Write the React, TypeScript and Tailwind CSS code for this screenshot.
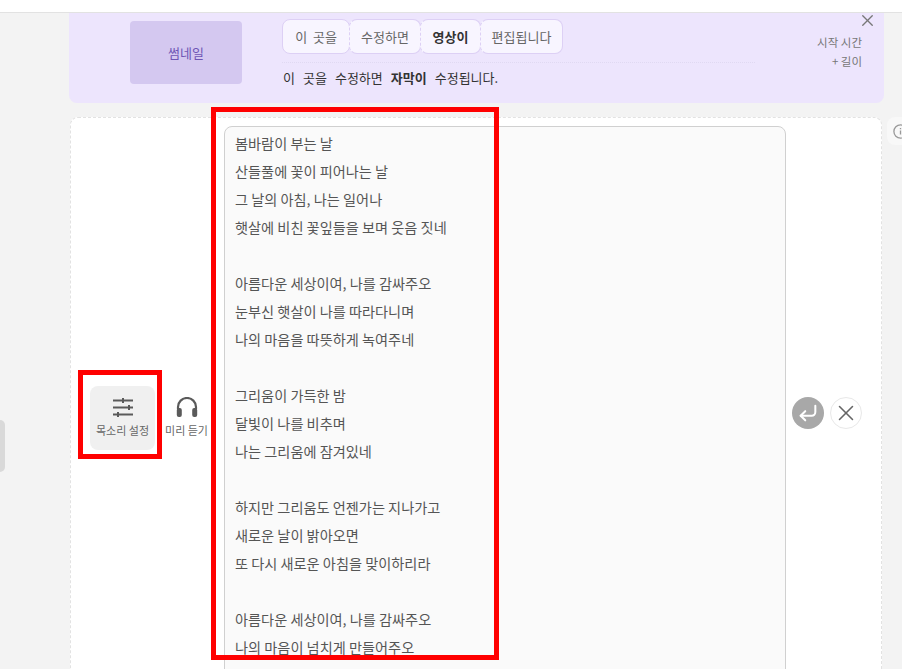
import { X, CornerDownLeft } from 'lucide-react';

const lyrics = [
  '봄바람이 부는 날',
  '산들풀에 꽃이 피어나는 날',
  '그 날의 아침, 나는 일어나',
  '햇살에 비친 꽃잎들을 보며 웃음 짓네',
  '',
  '아름다운 세상이여, 나를 감싸주오',
  '눈부신 햇살이 나를 따라다니며',
  '나의 마음을 따뜻하게 녹여주네',
  '',
  '그리움이 가득한 밤',
  '달빛이 나를 비추며',
  '나는 그리움에 잠겨있네',
  '',
  '하지만 그리움도 언젠가는 지나가고',
  '새로운 날이 밝아오면',
  '또 다시 새로운 아침을 맞이하리라',
  '',
  '아름다운 세상이여, 나를 감싸주오',
  '나의 마음이 넘치게 만들어주오',
];

const chips = [
  { text: '이  곳을', w: 'w-[68px]', bold: false },
  { text: '수정하면', w: 'w-[72px]', bold: false },
  { text: '영상이', w: 'w-[61px]', bold: true },
  { text: '편집됩니다', w: 'w-[83px]', bold: false },
];

const SlidersIcon = () => (
  <svg width="20" height="20" viewBox="0 0 20 20" className="mb-[5px] text-[#5a5a5a]" fill="none" stroke="currentColor">
    <path d="M0 3.5h20M0 10.5h20M0 17.5h20" strokeWidth="2" />
    <path d="M10 1v5M16 8v5M5 15v5" strokeWidth="2" />
  </svg>
);

const HeadphonesIcon = () => (
  <svg width="22" height="20" viewBox="0 0 22 20" className="mb-[5px] text-[#5a5a5a]" fill="none">
    <path d="M2 12V10a9 9 0 0 1 18 0v2" stroke="currentColor" strokeWidth="2.2" />
    <rect x="0.8" y="11" width="5" height="9" rx="2" fill="currentColor" />
    <rect x="16.2" y="11" width="5" height="9" rx="2" fill="currentColor" />
  </svg>
);

export default function App() {
  return (
    <div className="relative h-[669px] w-[902px] overflow-hidden bg-[#f3f3f3] font-['Noto_Sans_CJK_KR','Noto_Sans',sans-serif] text-[#555]">
      {/* top bar */}
      <div className="h-[13px] overflow-hidden border-b border-[#e2e2e2] bg-white pl-[7px]">
        <div className="-mt-[15px] text-[13px] leading-4 text-[#555]">메뉴</div>
      </div>

      <div className="pl-[69px] pr-[18px]">
        {/* subtitle panel */}
        <div className="relative flex h-[90px] rounded-b-lg bg-[#ede5fd]">
          <div className="ml-[61px] mt-2 flex h-[63px] w-[112px] items-center justify-center rounded bg-[#d4c8f0] text-[13px] text-[#6f55b5]">
            썸네일
          </div>
          <div className="ml-10 mt-1.5 w-[473px]">
            <div className="flex">
              {chips.map((chip, i) => (
                <div
                  key={chip.text}
                  className={`${chip.w} ${i > 0 ? '-ml-px [border-left-style:dashed]' : ''} flex h-[35px] items-center justify-center whitespace-pre rounded-lg border border-[#ddd0f5] bg-[#f8f5ff] text-[13px] ${chip.bold ? 'font-bold text-[#333]' : 'text-[#666]'}`}
                >
                  {chip.text}
                </div>
              ))}
            </div>
            <div className="mt-[8px] border-t border-dotted border-[#e0d9f2]" />
            <p className="mt-[5px] whitespace-pre pl-px text-[13px] leading-5 text-[#333] [word-spacing:1.1px]">
              이  곳을  수정하면  <b>자막이</b>  수정됩니다.
            </p>
          </div>
          <div className="ml-auto mr-[22px] mt-[20px] text-right text-[11.5px] leading-[19px] text-[#777]">
            <div>시작 시간</div>
            <div>+ 길이</div>
          </div>
          <X className="absolute right-[7px] top-[-2px] text-[#777]" size={19} strokeWidth={1.7} />
        </div>

        {/* editor card */}
        <div className="relative ml-px mr-[2px] mt-[14px] flex h-[600px] rounded-lg border border-dashed border-[#e2e2e2] bg-white">
          <div className="ml-[19px] mt-[268px] flex h-[64px] w-[65px] flex-col items-center justify-center rounded-lg bg-[#f0f0f0] text-[11px] text-[#666]">
            <SlidersIcon />
            목소리 설정
          </div>
          <div className="mt-[268px] h-[64px] w-[69px]">
            <div className="flex h-full w-[63px] flex-col items-center justify-center text-[11px] text-[#666]">
              <HeadphonesIcon />
              <span className="whitespace-nowrap">미리 듣기</span>
            </div>
          </div>
          <div className="mt-[8px] h-[600px] w-[562px] rounded-lg border border-[#d0d0d0] bg-[#fafafa] px-[10px] pt-[2px]">
            {lyrics.map((line, i) => (
              <div key={i} className="h-[28px] text-[14.2px] leading-[28px] text-[#555]">
                {line}
              </div>
            ))}
          </div>
          <div className="ml-[6px] mt-[279px] flex gap-1.5">
            <div className="flex h-8 w-8 items-center justify-center rounded-full bg-[#a8a8a8] text-white">
              <CornerDownLeft size={22} strokeWidth={2.2} />
            </div>
            <div className="flex h-8 w-8 items-center justify-center rounded-full border border-[#e8e8e8] bg-white text-[#666]">
              <X size={26} strokeWidth={1.4} />
            </div>
          </div>
        </div>
      </div>

      {/* info tab cut off at the right edge */}
      <div className="absolute left-[887px] top-[117px] flex h-[28px] w-[30px] items-center rounded-lg bg-[#f8f8f8] pl-[6px] text-[#999]">
        <svg width="15" height="15" viewBox="0 0 15 15" fill="none" stroke="currentColor" strokeWidth="1.3">
          <circle cx="7.5" cy="7.5" r="6.6" />
          <path d="M7.5 6.5v4M7.5 4v1.2" />
        </svg>
      </div>

      {/* left drawer handle */}
      <div className="absolute left-0 top-[420px] h-[52px] w-[5px] rounded-r-lg bg-[#d9d9d9]" />

      {/* red highlight boxes */}
      <div className="absolute left-[78px] top-[370px] h-[89px] w-[84px] border-[5px] border-[#ff0000]" />
      <div className="absolute left-[211px] top-[107px] h-[553px] w-[288px] border-[5px] border-[#ff0000]" />
    </div>
  );
}
